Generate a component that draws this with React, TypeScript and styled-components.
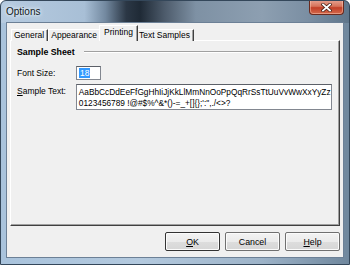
import React from "react";
import styled, { createGlobalStyle } from "styled-components";

const GlobalStyle = createGlobalStyle`
  html, body { margin: 0; padding: 0; background: #ffffff; }
  body { font-family: "Liberation Sans", Arial, sans-serif; font-size: 8.5px; color: #000; }
`;

const Window = styled.div`
  width: 350px;
  height: 265px;
  box-sizing: border-box;
  display: flex;
  flex-direction: column;
  border: 1px solid #34475a;
  border-radius: 6px 6px 0 0;
  background:
    linear-gradient(90deg, #b6cbe0 0%, #a8bfd6 24%, #7389a0 30%, #2b3745 36%, #1f2a36 40%, #4d5b6b 47%, #7e91a4 56%, #8d9fb1 75%, #7b8fa3 88%, #5f768b 100%) top / 100% 22px no-repeat,
    linear-gradient(90deg, #a9c3dc 0%, #b3c9de 40%, #9db3c8 75%, #6f879d 100%);
  overflow: hidden;
`;

const TitleBar = styled.div`
  height: 21px;
  display: flex;
  align-items: flex-start;
  justify-content: space-between;
  padding-left: 5px;
`;

const Title = styled.span`
  font-size: 10px;
  line-height: 22px;
  color: #101820;
  text-shadow: 0 0 5px #eef4fa, 0 0 3px #eef4fa;
`;

const CloseButton = styled.div`
  width: 35px;
  height: 15px;
  margin-right: 5px;
  margin-top: -1px;
  box-sizing: border-box;
  border: 1px solid #6a2a1e;
  border-top: none;
  border-radius: 0 0 4px 4px;
  background: linear-gradient(180deg, #e7a493 0%, #d7735a 45%, #c23f27 55%, #d46a4c 100%);
  display: flex;
  align-items: center;
  justify-content: center;
  box-shadow: inset 0 0 0 1px rgba(255, 210, 190, 0.45);
`;

const Client = styled.div`
  flex: 1;
  margin: 0 5px 6px 5px;
  background: #f0f0f0;
  border: 1px solid #6c8096;
  display: flex;
  flex-direction: column;
`;

const TabArea = styled.div`
  padding: 3px 3px 0 3px;
  display: flex;
  flex-direction: column;
`;

const TabRow = styled.div`
  display: flex;
  align-items: flex-end;
  padding-left: 1px;
  height: 15px;
  position: relative;
  z-index: 1;
  margin-bottom: -1px;
`;

const Tab = styled.div<{ $active?: boolean }>`
  height: ${(p) => (p.$active ? 16 : 12)}px;
  padding: ${(p) => (p.$active ? "1px 4px 0 4px" : "0 3px 0 2px")};
  margin: 0 ${(p) => (p.$active ? -2 : 0)}px;
  border-top: 1px solid #ffffff;
  border-left: 1px solid #ffffff;
  border-right: 1px solid #404040;
  box-shadow: inset -1px 0 0 #a0a0a0;
  background: #f0f0f0;
  line-height: 11px;
  box-sizing: border-box;
  white-space: nowrap;
  z-index: ${(p) => (p.$active ? 2 : 0)};
`;

const Panel = styled.div`
  height: 186px;
  box-sizing: border-box;
  border-top: 1px solid #ffffff;
  border-left: 1px solid #ffffff;
  border-right: 1px solid #404040;
  border-bottom: 1px solid #404040;
  box-shadow: inset -1px -1px 0 #a0a0a0;
  padding: 5px 7px 0 6px;
`;

const GroupHeader = styled.div`
  display: flex;
  align-items: center;
  gap: 9px;
  height: 12px;
`;

const GroupTitle = styled.span`
  font-weight: bold;
  font-size: 8.8px;
`;

const GroupLine = styled.div`
  flex: 1;
  height: 0;
  border-top: 1px solid #a0a0a0;
  border-bottom: 1px solid #ffffff;
`;

const FieldRow = styled.div<{ $gap: number }>`
  display: flex;
  align-items: flex-start;
  margin-top: ${(p) => p.$gap}px;
`;

const Label = styled.span<{ $top: number }>`
  width: 59px;
  line-height: 11px;
  padding-top: ${(p) => p.$top}px;
  white-space: nowrap;
`;

const SizeBox = styled.div`
  width: 25px;
  height: 14px;
  box-sizing: border-box;
  border: 1px solid #828790;
  border-top-color: #5c6068;
  background: #fff;
  padding: 1px 2px;
  line-height: 10px;
`;

const Selected = styled.span`
  background: #3399ff;
  color: #fff;
  display: inline-block;
  padding: 0 1px;
`;

const TextBox = styled.div`
  width: 257px;
  height: 26px;
  box-sizing: border-box;
  border: 1px solid #828790;
  border-top-color: #5c6068;
  background: #fff;
  padding: 2px 2px;
  line-height: 11px;
  font-size: 8.3px;
  white-space: nowrap;
  overflow: hidden;
`;

const ButtonRow = styled.div`
  display: flex;
  justify-content: flex-end;
  gap: 5px;
  padding: 6px 3px 0 0;
`;

const Button = styled.div<{ $default?: boolean }>`
  width: 55px;
  height: 19px;
  box-sizing: border-box;
  border: 1px solid ${(p) => (p.$default ? "#333333" : "#707070")};
  border-radius: 2px;
  background: linear-gradient(180deg, #f3f3f3 0%, #ebebeb 50%, #dddddd 51%, #d6d6d6 100%);
  display: flex;
  align-items: center;
  justify-content: center;
  box-shadow: inset 0 0 0 1px #fbfbfb;
  font-size: 8.8px;
`;

const U = styled.span`
  text-decoration: underline;
`;

export default function App() {
  return (
    <>
      <GlobalStyle />
      <Window>
        <TitleBar>
          <Title>Options</Title>
          <CloseButton>
            <svg width="11" height="9" viewBox="0 0 11 9">
              <path d="M2 1.5 L9 7.5 M9 1.5 L2 7.5" stroke="#4a2218" strokeWidth="3.4" strokeLinecap="square" />
              <path d="M2 1.5 L9 7.5 M9 1.5 L2 7.5" stroke="#ffffff" strokeWidth="1.8" strokeLinecap="square" />
            </svg>
          </CloseButton>
        </TitleBar>
        <Client>
          <TabArea>
            <TabRow>
              <Tab>General</Tab>
              <Tab>Appearance</Tab>
              <Tab $active>Printing</Tab>
              <Tab>Text Samples</Tab>
            </TabRow>
            <Panel>
              <GroupHeader>
                <GroupTitle>Sample Sheet</GroupTitle>
                <GroupLine />
              </GroupHeader>
              <FieldRow $gap={8}>
                <Label $top={2}>Font Size:</Label>
                <SizeBox>
                  <Selected>18</Selected>
                </SizeBox>
              </FieldRow>
              <FieldRow $gap={4}>
                <Label $top={2}>
                  <U>S</U>ample Text:
                </Label>
                <TextBox>
                  AaBbCcDdEeFfGgHhIiJjKkLlMmNnOoPpQqRrSsTtUuVvWwXxYyZz
                  <br />
                  0123456789 !@#$%^&amp;*()-=_+[]{"{}"};':",./&lt;&gt;?
                </TextBox>
              </FieldRow>
            </Panel>
          </TabArea>
          <ButtonRow>
            <Button $default>
              <span>
                <U>O</U>K
              </span>
            </Button>
            <Button>Cancel</Button>
            <Button>
              <span>
                <U>H</U>elp
              </span>
            </Button>
          </ButtonRow>
        </Client>
      </Window>
    </>
  );
}
